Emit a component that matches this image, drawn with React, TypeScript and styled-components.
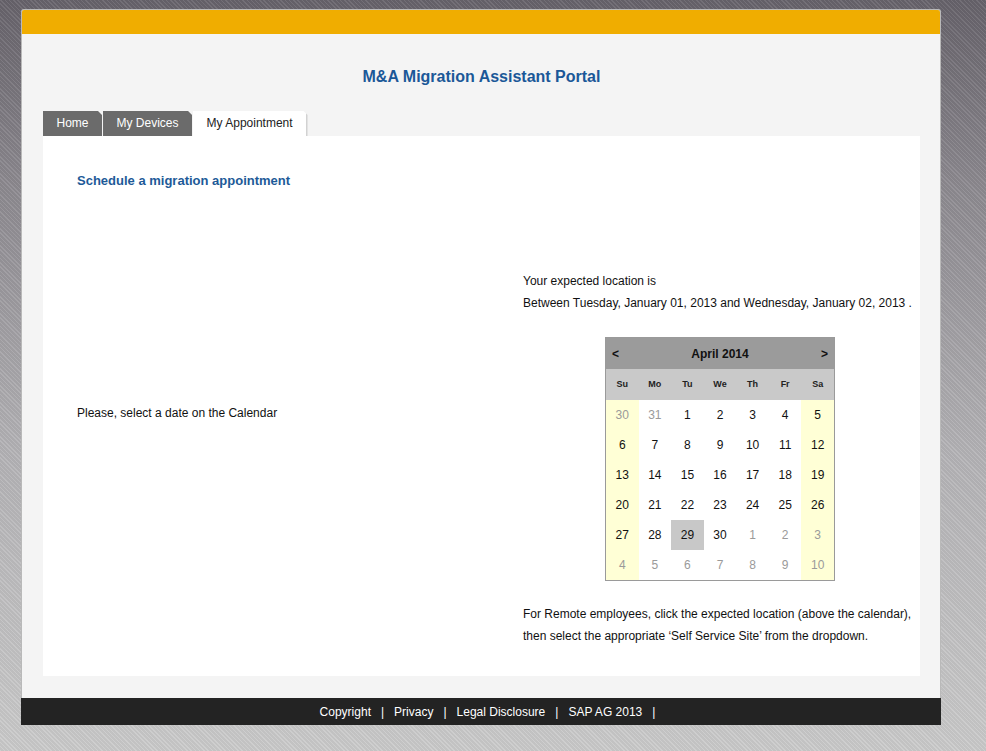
import React from "react";
import styled, { createGlobalStyle } from "styled-components";

const Global = createGlobalStyle`
  html, body { margin: 0; padding: 0; height: 100%; }
  body {
    font-family: "Liberation Sans", Arial, sans-serif;
    font-size: 12px;
    color: #111;
    background:
      repeating-linear-gradient(45deg, rgba(255,255,255,0.08) 0 1px, rgba(0,0,0,0.04) 1px 3px),
      linear-gradient(180deg, #67636b 0%, #8d8a90 25%, #b4b3b6 60%, #cbcbcb 100%);
    background-attachment: fixed;
  }
  #root { padding: 9px 0 0 21px; }
`;

const Frame = styled.div`
  width: 920px;
  box-sizing: border-box;
  border: 1px solid #b9b9b9;
  border-bottom: none;
  border-radius: 3px 3px 0 0;
  background: #f4f4f4;
  display: flex;
  flex-direction: column;
`;

const TopBar = styled.div`
  height: 24px;
  background: #f0ad00;
  border-radius: 2px 2px 0 0;
`;

const Main = styled.div`
  padding: 0 20px 22px 21px;
  display: flex;
  flex-direction: column;
`;

const Title = styled.h1`
  margin: 33px 0 24px;
  text-align: center;
  font-size: 16px;
  line-height: 20px;
  font-weight: bold;
  color: #1b5898;
`;

const Tabs = styled.div`
  display: flex;
  gap: 1px;
  height: 25px;
`;

const Tab = styled.div<{ $active?: boolean }>`
  height: 25px;
  line-height: 25px;
  padding: ${(p) => (p.$active ? "0 13px 0 13.5px" : "0 13.5px")};
  font-size: 12px;
  color: ${(p) => (p.$active ? "#222" : "#fff")};
  background: ${(p) => (p.$active ? "#fff" : "#6b6b6b")};
  border-right: ${(p) => (p.$active ? "2px solid #d2d2d2" : "none")};
  clip-path: polygon(0 0, calc(100% - 4px) 0, 100% 4px, 100% 100%, 0 100%);
  cursor: pointer;
`;

const Content = styled.div`
  background: #fff;
  height: 540px;
  box-sizing: border-box;
  padding: 36px 3px 0 34px;
`;

const Heading = styled.h2`
  margin: 0;
  font-size: 13px;
  line-height: 18px;
  font-weight: bold;
  color: #1d5a98;
`;

const Columns = styled.div`
  margin-top: 80px;
  display: grid;
  grid-template-columns: 446px 1fr;
`;

const LeftCol = styled.div`
  padding-top: 132px;
`;

const RightCol = styled.div`
  display: flex;
  flex-direction: column;
`;

const Text = styled.p`
  margin: 0;
  font-size: 12px;
  line-height: 22px;
  color: #111;
`;

const CalendarWrap = styled.div`
  display: flex;
  justify-content: center;
  margin: 23px 0 22px;
`;

const Calendar = styled.div`
  width: 230px;
  box-sizing: border-box;
  border: 1px solid #9a9a9a;
  background: #fff;
`;

const CalHeader = styled.div`
  height: 31px;
  background: #9b9b9b;
  display: flex;
  align-items: center;
  justify-content: space-between;
  padding: 0 6px;
  font-weight: bold;
  font-size: 12px;
  color: #111;
`;

const Arrow = styled.span`
  font-weight: bold;
  cursor: pointer;
`;

const Grid = styled.div`
  display: grid;
  grid-template-columns: repeat(7, 1fr);
`;

const DayName = styled.div`
  height: 31px;
  line-height: 31px;
  background: #c9c9c9;
  text-align: center;
  font-size: 9px;
  font-weight: bold;
  color: #222;
`;

const Day = styled.div<{ $weekend?: boolean; $other?: boolean; $selected?: boolean }>`
  height: 30px;
  line-height: 30px;
  text-align: center;
  font-size: 12px;
  color: ${(p) => (p.$other ? "#9a9a9a" : "#111")};
  background: ${(p) => (p.$selected ? "#c8c8c8" : p.$weekend ? "#ffffd6" : "#fff")};
  cursor: pointer;
`;

const Footer = styled.div`
  width: 920px;
  height: 27px;
  background: #232323;
  display: flex;
  align-items: center;
  justify-content: center;
  padding-left: 23px;
  box-sizing: border-box;
  color: #fff;
  font-size: 12px;
`;

const FooterLink = styled.span`
  color: #fff;
`;

const Sep = styled.span`
  margin: 0 10px;
`;

const dayNames = ["Su", "Mo", "Tu", "We", "Th", "Fr", "Sa"];

type Cell = { d: number; other: boolean };
const weeks: Cell[][] = (() => {
  const cells: Cell[] = [];
  cells.push({ d: 30, other: true }, { d: 31, other: true });
  for (let i = 1; i <= 30; i++) cells.push({ d: i, other: false });
  for (let i = 1; i <= 10; i++) cells.push({ d: i, other: true });
  const out: Cell[][] = [];
  for (let i = 0; i < 6; i++) out.push(cells.slice(i * 7, i * 7 + 7));
  return out;
})();

const footerLinks = ["Copyright", "Privacy", "Legal Disclosure", "SAP AG 2013"];

export default function App() {
  return (
    <>
      <Global />
      <Frame>
        <TopBar />
        <Main>
          <Title>M&amp;A Migration Assistant Portal</Title>
          <Tabs>
            <Tab>Home</Tab>
            <Tab>My Devices</Tab>
            <Tab $active>My Appointment</Tab>
          </Tabs>
          <Content>
            <Heading>Schedule a migration appointment</Heading>
            <Columns>
              <LeftCol>
                <Text>Please, select a date on the Calendar</Text>
              </LeftCol>
              <RightCol>
                <Text>Your expected location is</Text>
                <Text>Between Tuesday, January 01, 2013 and Wednesday, January 02, 2013 .</Text>
                <CalendarWrap>
                  <Calendar>
                    <CalHeader>
                      <Arrow>&lt;</Arrow>
                      <span>April 2014</span>
                      <Arrow>&gt;</Arrow>
                    </CalHeader>
                    <Grid>
                      {dayNames.map((n) => (
                        <DayName key={n}>{n}</DayName>
                      ))}
                      {weeks.map((w, wi) =>
                        w.map((c, ci) => (
                          <Day
                            key={`${wi}-${ci}`}
                            $weekend={ci === 0 || ci === 6}
                            $other={c.other}
                            $selected={!c.other && c.d === 29}
                          >
                            {c.d}
                          </Day>
                        ))
                      )}
                    </Grid>
                  </Calendar>
                </CalendarWrap>
                <Text>For Remote employees, click the expected location (above the calendar),</Text>
                <Text>then select the appropriate ‘Self Service Site’ from the dropdown.</Text>
              </RightCol>
            </Columns>
          </Content>
        </Main>
      </Frame>
      <Footer>
        {footerLinks.map((l) => (
          <React.Fragment key={l}>
            <FooterLink>{l}</FooterLink>
            <Sep>|</Sep>
          </React.Fragment>
        ))}
      </Footer>
    </>
  );
}
